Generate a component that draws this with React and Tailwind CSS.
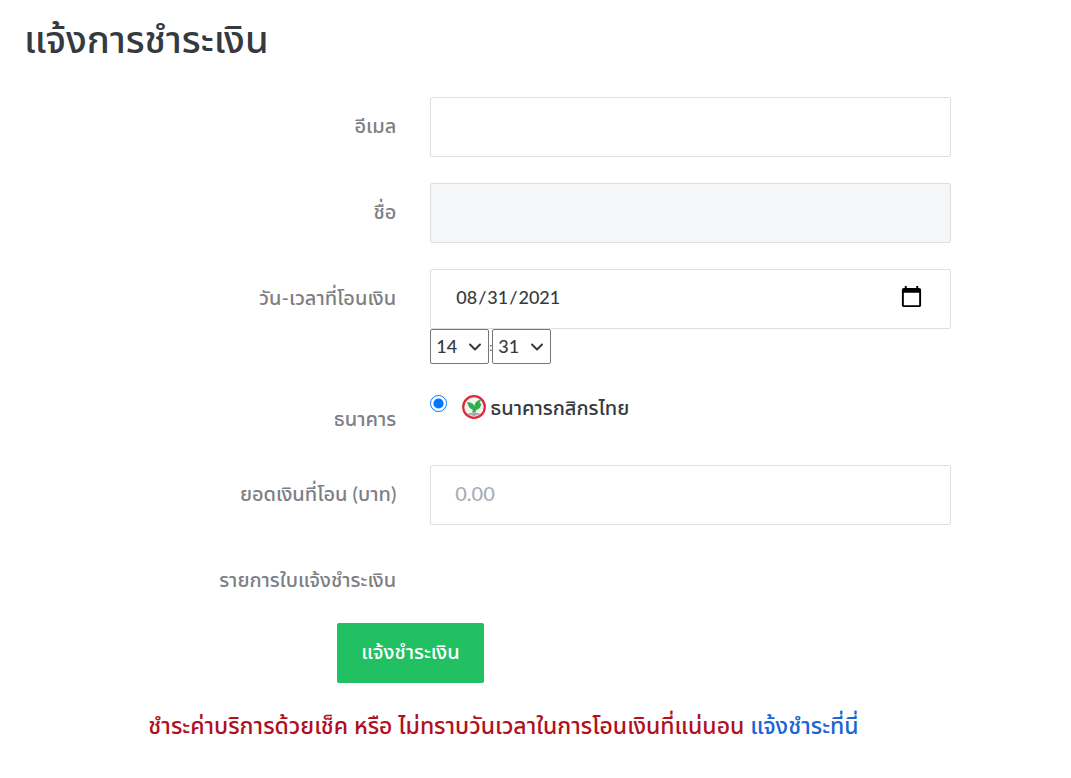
import React, { useState } from 'react';
import { ChevronDown } from 'lucide-react';

const hours = Array.from({ length: 24 }, (_, i) => String(i).padStart(2, '0'));
const minutes = Array.from({ length: 60 }, (_, i) => String(i).padStart(2, '0'));

const inputClass =
  'block w-full h-[60px] px-6 pb-1 text-[#343a40] border border-[#dcdee0] rounded-xs outline-none placeholder:text-[#a9adb8]';

const Row = ({ label, htmlFor, className = '', children }) => (
  <div className={`flex items-start ${className}`}>
    <label htmlFor={htmlFor} className="w-[37%] shrink-0 pt-3.5 text-right text-xl text-[#7d7f86] font-medium">
      {label}
    </label>
    <div className="flex-1 min-w-0 pl-[34px] pr-30">{children}</div>
  </div>
);

const TimeSelect = ({ label, value, onChange, options }) => (
  <div className="relative">
    <select
      aria-label={label}
      value={value}
      onChange={(e) => onChange(e.target.value)}
      className="block appearance-none w-[59px] h-[35px] pl-[5px] pb-0.5 text-lg font-medium bg-white border border-[#767676] rounded-xs"
    >
      {options.map((o) => <option key={o}>{o}</option>)}
    </select>
    <ChevronDown className="absolute right-1 top-2 w-5 h-5 pointer-events-none" strokeWidth={2.4} />
  </div>
);

const BankLogo = () => (
  <svg viewBox="0 0 24 24" className="w-6 h-6 shrink-0" aria-hidden="true">
    <circle cx="12" cy="12" r="10.8" fill="#f4f5f3" stroke="#dc2a38" strokeWidth="2.2" />
    <path d="M5 18.8Q12 16.6 19 18.8Q12 23 5 18.8Z" fill="#a9aaa6" />
    <path d="M9.8 17.6C10.8 16.6 11 15.6 10.4 14.6C7.4 13.6 6 11 5.2 7C9.8 7.4 12 9 12.3 11.6C12.8 7.8 14.6 5.4 18.8 4.4C18.6 6 18 7.2 17.4 8.2L19.4 8.4C18.8 12.4 17 14.2 14.4 14.8C13.6 15.8 13.6 16.8 14 17.6Z" fill="#2fae4e" />
  </svg>
);

export default function App() {
  const [date, setDate] = useState('2021-08-31');
  const [hour, setHour] = useState('14');
  const [minute, setMinute] = useState('31');

  return (
    <div className="min-h-screen bg-white pb-8 font-[Lato,'Noto_Sans_Thai',sans-serif] text-[#343a40]">
      <h1 className="px-6 pt-3.5 text-[38px] leading-12 font-medium">แจ้งการชำระเงิน</h1>

      <form className="mt-[35px] flex flex-col gap-[26px]" onSubmit={(e) => e.preventDefault()}>
        <Row label="อีเมล" htmlFor="email">
          <input id="email" type="email" className={`${inputClass} text-xl`} />
        </Row>

        <Row label="ชื่อ" htmlFor="name">
          <input id="name" type="text" readOnly className={`${inputClass} text-xl bg-[#f5f6f8]`} />
        </Row>

        <Row label="วัน-เวลาที่โอนเงิน" htmlFor="date">
          <input
            id="date"
            type="date"
            value={date}
            onChange={(e) => setDate(e.target.value)}
            className={`${inputClass} text-lg font-medium [&::-webkit-calendar-picker-indicator]:w-[25px] [&::-webkit-calendar-picker-indicator]:h-[25px]`}
          />
          <div className="flex items-center">
            <TimeSelect label="ชั่วโมง" value={hour} onChange={setHour} options={hours} />
            <span className="w-[3px] text-xs">:</span>
            <TimeSelect label="นาที" value={minute} onChange={setMinute} options={minutes} />
          </div>
        </Row>

        <Row label="ธนาคาร" htmlFor="bank" className="h-[49px]">
          <div className="flex items-start pt-1">
            <input id="bank" type="radio" name="bank" defaultChecked className="mt-px w-[17px] h-[17px] accent-[#0075ff]" />
            <label htmlFor="bank" className="ml-[15px] pt-px flex items-start gap-1 text-xl leading-6">
              <BankLogo />
              <span className="font-medium">ธนาคารกสิกรไทย</span>
            </label>
          </div>
        </Row>

        <Row label="ยอดเงินที่โอน (บาท)" htmlFor="amount">
          <input id="amount" type="text" inputMode="decimal" placeholder="0.00" className={`${inputClass} text-xl font-medium`} />
        </Row>

        <Row label="รายการใบแจ้งชำระเงิน" className="h-[46px]" />

        <div className="pl-[31.5%]">
          <button type="submit" className="h-[60px] px-6 pb-1 rounded-xs bg-[#20c063] text-xl font-medium text-white">
            แจ้งชำระเงิน
          </button>
        </div>
      </form>

      <p className="mt-6 pr-16 text-center text-[23px] leading-9 font-medium text-[#b01020]">
        ชำระค่าบริการด้วยเช็ค หรือ ไม่ทราบวันเวลาในการโอนเงินที่แน่นอน{' '}
        <a href="#cheque" className="text-[#1b66d2]">แจ้งชำระที่นี่</a>
      </p>
    </div>
  );
}
